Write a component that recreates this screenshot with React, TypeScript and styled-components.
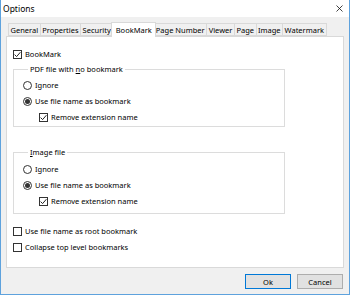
import React from "react";
import styled, { createGlobalStyle } from "styled-components";

const Global = createGlobalStyle`
  html, body { margin: 0; padding: 0; background: #ffffff; }
  body { font-family: "Noto Sans", "Segoe UI", sans-serif; }
`;

const Window = styled.div`
  width: 350px;
  height: 295px;
  box-sizing: border-box;
  border: 1px solid #5ea2dd;
  border-top: none;
  display: flex;
  flex-direction: column;
  background: #f0f0f0;
  font-size: 7.5px;
  color: #000;
`;

const TitleBar = styled.div`
  height: 17px;
  background: #ffffff;
  display: flex;
  align-items: center;
  justify-content: space-between;
  padding: 0 6px 0 2px;
  font-size: 8.5px;
`;

const CloseIcon = styled.svg`
  width: 7px;
  height: 7px;
  margin-top: -1px;
`;

const Body = styled.div`
  flex: 1;
  display: flex;
  flex-direction: column;
  padding: 5px 5px 5px 5px;
  min-height: 0;
`;

const TabStrip = styled.div`
  display: flex;
  align-items: flex-end;
  height: 14px;
  padding-left: 3px;
  position: relative;
  z-index: 1;
`;

const Tab = styled.div<{ $active?: boolean }>`
  box-sizing: border-box;
  height: ${(p) => (p.$active ? 15 : 13)}px;
  padding: 0 ${(p) => (p.$active ? 3.5 : 1.5)}px;
  margin-left: ${(p) => (p.$active ? -2 : -1)}px;
  margin-right: ${(p) => (p.$active ? -2 : 0)}px;
  margin-bottom: ${(p) => (p.$active ? -1 : 0)}px;
  border: 1px solid #d9d9d9;
  border-bottom: ${(p) => (p.$active ? "none" : "1px solid #d9d9d9")};
  background: ${(p) => (p.$active ? "#ffffff" : "#f0f0f0")};
  display: flex;
  align-items: center;
  white-space: nowrap;
  position: relative;
  z-index: ${(p) => (p.$active ? 2 : 1)};
`;

const Panel = styled.div`
  flex: 1;
  background: #ffffff;
  border: 1px solid #d9d9d9;
  display: flex;
  flex-direction: column;
  padding: 9px 6px 0 6px;
`;

const Row = styled.div<{ $indent?: number; $top?: number }>`
  height: 16px;
  display: flex;
  align-items: center;
  gap: 3px;
  padding-left: ${(p) => p.$indent ?? 0}px;
  margin-top: ${(p) => p.$top ?? 0}px;
  white-space: nowrap;
`;

const Box = styled.span`
  box-sizing: border-box;
  width: 9px;
  height: 9px;
  border: 1px solid #333333;
  background: #ffffff;
  display: inline-flex;
  align-items: center;
  justify-content: center;
  flex: none;
`;

const Radio = styled.span<{ $on?: boolean }>`
  box-sizing: border-box;
  width: 9px;
  height: 9px;
  border-radius: 50%;
  border: 1px solid #333333;
  background: #ffffff;
  display: inline-flex;
  align-items: center;
  justify-content: center;
  flex: none;
  &::after {
    content: "";
    width: 5px;
    height: 5px;
    border-radius: 50%;
    background: ${(p) => (p.$on ? "#333333" : "transparent")};
  }
`;

const Group = styled.fieldset<{ $top: number; $padTop: number; $padBottom: number }>`
  margin: ${(p) => p.$top}px 0 0 0;
  width: 272px;
  box-sizing: border-box;
  border: 1px solid #dcdcdc;
  padding: ${(p) => p.$padTop}px 0 ${(p) => p.$padBottom}px 9px;
  min-width: 0;
`;

const Legend = styled.legend`
  line-height: 10px;
  padding: 0 2px;
  margin-left: 5px;
`;

const ButtonRow = styled.div`
  display: flex;
  justify-content: flex-end;
  gap: 6px;
  margin-top: 6px;
  padding-right: 1px;
`;

const Button = styled.button<{ $primary?: boolean }>`
  width: 46px;
  height: 15px;
  box-sizing: border-box;
  background: #e1e1e1;
  border: 1px solid ${(p) => (p.$primary ? "#0078d7" : "#adadad")};
  font-family: inherit;
  font-size: 7.5px;
  color: #000;
  padding: 0;
`;

const Check = () => (
  <svg width="7" height="7" viewBox="0 0 7 7">
    <path d="M0.6 3.6 L2.6 5.6 L6.4 1.2" fill="none" stroke="#222" strokeWidth="1" />
  </svg>
);

const CheckBox = ({
  on,
  label,
  indent,
  top,
}: {
  on?: boolean;
  label: React.ReactNode;
  indent?: number;
  top?: number;
}) => (
  <Row $indent={indent} $top={top}>
    <Box>{on && <Check />}</Box>
    <span>{label}</span>
  </Row>
);

const RadioRow = ({ on, label }: { on?: boolean; label: string }) => (
  <Row>
    <Radio $on={on} />
    <span>{label}</span>
  </Row>
);

const tabs = ["General", "Properties", "Security", "BookMark", "Page Number", "Viewer", "Page", "Image", "Watermark"];

export default function App() {
  return (
    <>
      <Global />
      <Window>
        <TitleBar>
          <span>Options</span>
          <CloseIcon viewBox="0 0 7 7">
            <path d="M0.5 0.5 L6.5 6.5 M6.5 0.5 L0.5 6.5" stroke="#111" strokeWidth="0.8" />
          </CloseIcon>
        </TitleBar>
        <Body>
          <TabStrip>
            {tabs.map((t) => (
              <Tab key={t} $active={t === "BookMark"}>
                {t}
              </Tab>
            ))}
          </TabStrip>
          <Panel>
            <CheckBox on label="BookMark" />
            <Group $top={2} $padTop={3} $padBottom={1}>
              <Legend>
                PDF file with <u>n</u>o bookmark
              </Legend>
              <RadioRow label="Ignore" />
              <RadioRow on label="Use file name as bookmark" />
              <CheckBox on indent={16} label="Remove extension name" />
            </Group>
            <Group $top={20} $padTop={4} $padBottom={4}>
              <Legend>
                <u>I</u>mage file
              </Legend>
              <RadioRow label="Ignore" />
              <RadioRow on label="Use file name as bookmark" />
              <CheckBox on indent={16} label="Remove extension name" />
            </Group>
            <CheckBox top={9} label="Use file name as root bookmark" />
            <CheckBox label="Collapse top level bookmarks" />
          </Panel>
          <ButtonRow>
            <Button $primary>Ok</Button>
            <Button>Cancel</Button>
          </ButtonRow>
        </Body>
      </Window>
    </>
  );
}
